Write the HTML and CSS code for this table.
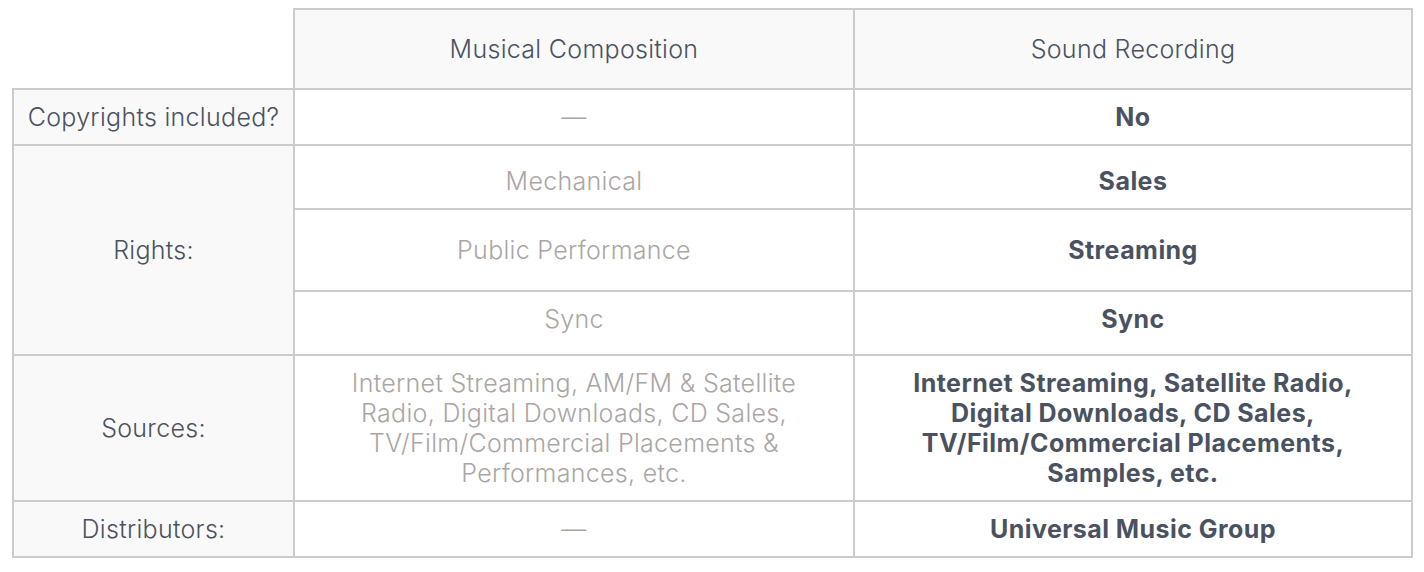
FILE: index.html
```html
<!DOCTYPE html>
<html lang="en">
<head>
<meta charset="utf-8">
<title>Rights comparison</title>
<link rel="stylesheet" href="styles.css">
</head>
<body>
<table class="rights">
  <colgroup>
    <col class="c-label">
    <col class="c-comp">
    <col class="c-rec">
  </colgroup>
  <thead>
    <tr class="r-head">
      <th class="blank"></th>
      <th class="head">Musical Composition</th>
      <th class="head">Sound Recording</th>
    </tr>
  </thead>
  <tbody>
    <tr class="r-a">
      <td class="label">Copyrights included?</td>
      <td class="muted">—</td>
      <td class="strong">No</td>
    </tr>
    <tr class="r-b">
      <td class="label" rowspan="3">Rights:</td>
      <td class="muted low">Mechanical</td>
      <td class="strong low">Sales</td>
    </tr>
    <tr class="r-c">
      <td class="muted">Public Performance</td>
      <td class="strong">Streaming</td>
    </tr>
    <tr class="r-b">
      <td class="muted high">Sync</td>
      <td class="strong high">Sync</td>
    </tr>
    <tr class="r-d">
      <td class="label">Sources:</td>
      <td class="muted">Internet Streaming, AM/FM &amp; Satellite<br>Radio, Digital Downloads, CD Sales,<br>TV/Film/Commercial Placements &amp;<br>Performances, etc.</td>
      <td class="strong">Internet Streaming, Satellite Radio,<br>Digital Downloads, CD Sales,<br>TV/Film/Commercial Placements,<br>Samples, etc.</td>
    </tr>
    <tr class="r-a">
      <td class="label">Distributors:</td>
      <td class="muted">—</td>
      <td class="strong">Universal Music Group</td>
    </tr>
  </tbody>
</table>
</body>
</html>
```

FILE: styles.css
```css
html, body {
  margin: 0;
  padding: 0;
  background: #ffffff;
}

body {
  padding: 8px 0 0 12px;
  font-family: Inter, "Liberation Sans", sans-serif;
  font-size: 25px;
  font-weight: 300;
  letter-spacing: 0.3px;
  color: #4a5261;
}

.rights {
  border-collapse: collapse;
  table-layout: fixed;
  width: 1399px;
}

.c-label { width: 281px; }
.c-comp { width: 560px; }
.c-rec { width: 558px; }

.rights th,
.rights td {
  border: 2px solid #cccccc;
  text-align: center;
  vertical-align: middle;
  padding: 0 6px;
  line-height: 30px;
}

.rights th.blank {
  border-top: none;
  border-left: none;
  background: #ffffff;
}

.rights th.head {
  background: #f9f9f9;
  font-weight: 300;
}

.r-head { height: 80px; }
.r-a { height: 56px; }
.r-b { height: 64px; }
.r-c { height: 82px; }
.r-d { height: 146px; }

.rights td.low { padding-top: 8px; }
.rights td.high { padding-bottom: 8px; }

.label {
  background: #f9f9f9;
}

.muted {
  color: #aba6a4;
}

.strong {
  font-weight: 700;
  letter-spacing: 0.45px;
}
```
